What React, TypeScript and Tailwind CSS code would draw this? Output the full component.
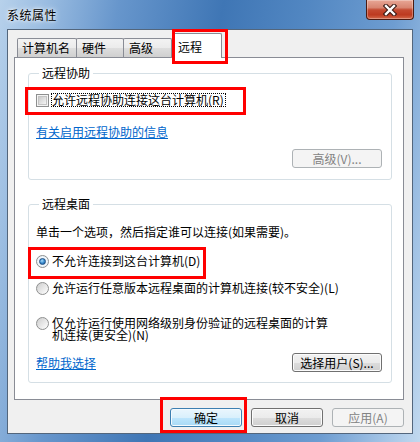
import React from "react";

type BtnProps = {
  children: React.ReactNode;
  disabled?: boolean;
  primary?: boolean;
  className?: string;
};

const Button = ({ children, disabled, primary, className }: BtnProps) => {
  let look =
    "border-[#707070] bg-[linear-gradient(#f2f2f2_0%,#ebebeb_50%,#dddddd_50%,#cfcfcf_100%)] text-black shadow-[inset_0_0_0_1px_#fbfbfb]";
  if (disabled) look = "border-[#adb2b5] bg-[#f4f4f4] text-[#838383]";
  if (primary)
    look =
      "border-[#3c7fb1] bg-[linear-gradient(#eaf6fd_0%,#d9f0fc_50%,#bee6fd_50%,#a7d9f5_100%)] text-black shadow-[inset_0_0_0_1px_#f4fafe]";
  return (
    <div
      className={`flex h-[19px] items-center justify-center rounded-[3px] border leading-[14px] ${look} ${className ?? ""}`}
    >
      {children}
    </div>
  );
};

const Radio = ({ checked = false }: { checked?: boolean }) => (
  <span
    className={
      checked
        ? "flex h-[13px] w-[13px] shrink-0 items-center justify-center rounded-full border border-[#8e8f8f] bg-[radial-gradient(circle,#ffffff_30%,#d6e9f6_100%)]"
        : "flex h-[13px] w-[13px] shrink-0 items-center justify-center rounded-full border border-[#8e8f8f] bg-[linear-gradient(135deg,#cdcdcd_0%,#f8f8f8_85%)]"
    }
  >
    {checked && (
      <span className="h-[7px] w-[7px] rounded-full border border-[#1c4f86] bg-[radial-gradient(circle_at_40%_35%,#a9dcfc_0%,#3d8fd0_50%,#16508f_100%)]" />
    )}
  </span>
);

const Checkbox = () => (
  <span className="flex h-[13px] w-[13px] shrink-0 items-center justify-center border border-[#8e8f8f] bg-[#f4f4f4]">
    <span className="h-[9px] w-[9px] border border-[#c4c4c4] bg-[linear-gradient(135deg,#cbcbcb_0%,#f4f4f4_100%)]" />
  </span>
);

const App: React.FC = () => {
  return (
    <div className="relative flex h-[442px] w-[420px] flex-col overflow-hidden bg-[linear-gradient(100deg,#b7d1eb_0%,#9fc0e3_8%,#6796cc_24%,#3f76b5_45%,#5287c2_62%,#6e9dd1_80%,#a5c5e6_93%,#c2d9ef_100%)] font-['Noto_Sans_CJK_SC','Noto_Sans_CJK_JP',sans-serif] text-[12px] leading-[14px] text-black">
      {/* Title bar */}
      <div className="flex h-[29px] shrink-0">
        <div className="pl-[7px] pt-[8px] tracking-[0.5px] [text-shadow:0_0_6px_#ffffff,0_0_3px_#ffffff]">
          系统属性
        </div>
        <div className="ml-auto mr-[6px] flex h-[20px] w-[48px] items-center justify-center rounded-b-[4px] border border-t-0 border-[#4c1b12] bg-[linear-gradient(#e8a796_0%,#d88571_40%,#c44a31_52%,#bd3a20_78%,#d46a4c_100%)] shadow-[inset_0_0_0_1px_rgba(255,255,255,0.3)]">
          <svg width="14" height="12" viewBox="0 0 14 12">
            <path d="M3 2 L11 10 M11 2 L3 10" stroke="#3a1a14" strokeWidth="4.5" strokeLinecap="square" />
            <path d="M3 2 L11 10 M11 2 L3 10" stroke="#ffffff" strokeWidth="2.4" strokeLinecap="square" />
          </svg>
        </div>
      </div>

      {/* Client area */}
      <div className="ml-[7px] flex h-[405px] w-[406px] shrink-0 flex-col border border-[#53667c] bg-[#f0f0f0]">
        {/* Tabs */}
        <div className="flex h-[27px] items-end pl-[9px]">
          <div className="flex h-[19px] w-[60px] items-center rounded-t-[2px] border border-b-0 border-[#898c95] bg-[linear-gradient(#f3f3f3_0%,#ebebeb_50%,#dedede_50%,#d0d0d0_100%)] pl-[4px]">
            计算机名
          </div>
          <div className="-ml-px flex h-[19px] w-[48px] items-center rounded-t-[2px] border border-b-0 border-[#898c95] bg-[linear-gradient(#f3f3f3_0%,#ebebeb_50%,#dedede_50%,#d0d0d0_100%)] pl-[5px]">
            硬件
          </div>
          <div className="-ml-px flex h-[19px] w-[49px] items-center rounded-t-[2px] border border-b-0 border-[#898c95] bg-[linear-gradient(#f3f3f3_0%,#ebebeb_50%,#dedede_50%,#d0d0d0_100%)] pl-[5px]">
            高级
          </div>
          <div className="relative z-10 -mb-px flex h-[25px] w-[50px] items-start rounded-t-[2px] border border-b-0 border-[#898c95] bg-white pl-[5px] pt-[6px]">
            远程
            <span className="absolute -right-[7px] -bottom-[6px] -top-[5px] -left-[1px] border-[3px] border-[#ff0000]" />
          </div>
        </div>

        {/* Panel */}
        <div className="ml-[6px] flex h-[343px] w-[390px] flex-col border border-[#898c95] bg-white pl-[13px] pr-[11px] pt-[8px]">
          {/* 远程协助 */}
          <fieldset className="flex flex-col rounded-[3px] border border-[#d5dfe5] pb-[11px] pl-[7px]">
            <legend className="ml-[3px] px-[3px] leading-[14px]">远程协助</legend>
            <div className="relative mt-[13px] flex h-[14px] items-center">
              <Checkbox />
              <span className="ml-[2px] border border-dotted border-black pr-[1px] leading-[12px]">
                允许远程协助连接这台计算机(R)
              </span>
              <span className="absolute -left-[11px] -top-[6px] h-[28px] w-[221px] border-[3px] border-[#ff0000]" />
            </div>
            <div className="mt-[18px] h-[14px] text-[#0066cc] underline">有关启用远程协助的信息</div>
            <Button disabled className="mr-[9px] mt-[10px] w-[90px] self-end">
              高级(V)...
            </Button>
          </fieldset>

          {/* 远程桌面 */}
          <fieldset className="mt-[17px] flex flex-col rounded-[3px] border border-[#d5dfe5] pb-[10px] pl-[7px]">
            <legend className="ml-[3px] px-[3px] leading-[14px]">远程桌面</legend>
            <div className="mt-[14px] h-[14px]">单击一个选项，然后指定谁可以连接(如果需要)。</div>
            <div className="relative mt-[15px] flex h-[14px] items-center gap-[3px]">
              <Radio checked />
              <span>不允许连接到这台计算机(D)</span>
              <span className="absolute -left-[8px] -top-[7px] h-[32px] w-[178px] border-[3px] border-[#ff0000]" />
            </div>
            <div className="mt-[13px] flex h-[14px] items-center gap-[3px]">
              <Radio />
              <span>允许运行任意版本远程桌面的计算机连接(较不安全)(L)</span>
            </div>
            <div className="mt-[22px] flex items-start gap-[3px]">
              <Radio />
              <span className="w-[282px] leading-[12px]">
                仅允许运行使用网络级别身份验证的远程桌面的计算机连接(更安全)(N)
              </span>
            </div>
            <div className="mt-[12px] flex h-[19px] items-center justify-between pr-[9px]">
              <span className="text-[#0066cc] underline">帮助我选择</span>
              <Button className="w-[90px]">选择用户(S)...</Button>
            </div>
          </fieldset>
        </div>

        {/* Dialog buttons */}
        <div className="mt-[8px] flex justify-end gap-[9px] pr-[8px]">
          <div className="relative">
            <Button primary className="w-[72px]">
              确定
            </Button>
            <span className="absolute -left-[10px] -top-[11px] h-[36px] w-[87px] border-[3px] border-[#ff0000]" />
          </div>
          <Button className="w-[72px]">取消</Button>
          <Button disabled className="w-[72px]">
            应用(A)
          </Button>
        </div>
      </div>
    </div>
  );
};

export default App;
